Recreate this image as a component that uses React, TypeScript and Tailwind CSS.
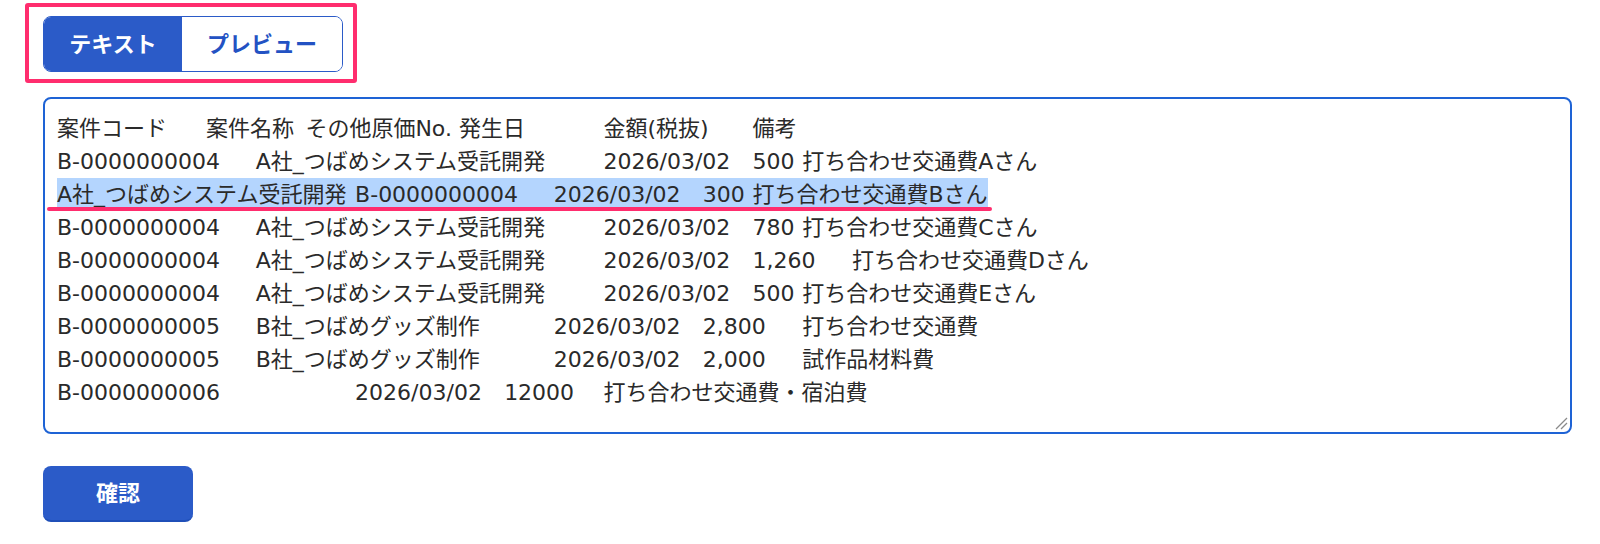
import { useState } from 'react';

const FONT = '"DejaVu Sans", "Noto Sans CJK JP", sans-serif';

const lines = [
  '案件コード\t案件名称\tその他原価No. 発生日\t\t金額(税抜)\t備考',
  'B-0000000004\tA社_つばめシステム受託開発\t\t2026/03/02\t500\t打ち合わせ交通費Aさん',
  'A社_つばめシステム受託開発\tB-0000000004\t2026/03/02\t300\t打ち合わせ交通費Bさん',
  'B-0000000004\tA社_つばめシステム受託開発\t\t2026/03/02\t780\t打ち合わせ交通費Cさん',
  'B-0000000004\tA社_つばめシステム受託開発\t\t2026/03/02\t1,260\t打ち合わせ交通費Dさん',
  'B-0000000004\tA社_つばめシステム受託開発\t\t2026/03/02\t500\t打ち合わせ交通費Eさん',
  'B-0000000005\tB社_つばめグッズ制作\t\t2026/03/02\t2,800\t打ち合わせ交通費',
  'B-0000000005\tB社_つばめグッズ制作\t\t2026/03/02\t2,000\t試作品材料費',
  'B-0000000006\t\t\t2026/03/02\t12000\t打ち合わせ交通費・宿泊費',
];

const selectedLine = 2;

export default function App() {
  const [mode, setMode] = useState<'text' | 'preview'>('text');

  return (
    <div
      className="min-h-screen bg-white pl-[43px] pr-[28px] pt-4"
      style={{ fontFamily: FONT }}
    >
      {/* tab switcher */}
      <div className="relative w-fit">
        <div className="flex h-14 overflow-hidden rounded-lg border border-[#2b5bc8]">
          <button
            onClick={() => setMode('text')}
            className={
              mode === 'text'
                ? 'w-[138px] bg-[#2b5bc8] text-[22px] font-bold text-white'
                : 'w-[138px] bg-white text-[22px] font-bold text-[#2352c3]'
            }
          >
            テキスト
          </button>
          <button
            onClick={() => setMode('preview')}
            className={
              mode === 'preview'
                ? 'w-[160px] bg-[#2b5bc8] text-[22px] font-bold text-white'
                : 'w-[160px] bg-white text-[22px] font-bold text-[#2352c3]'
            }
          >
            プレビュー
          </button>
        </div>
        {/* annotation frame */}
        <span className="pointer-events-none absolute -left-[18px] -top-[13px] h-[80px] w-[332px] rounded-[3px] border-4 border-[#ff2d6e]" />
      </div>

      {/* textarea-like editor */}
      <div className="relative mt-[25px] h-[337px] w-full rounded-lg border-2 border-[#1e63d5] bg-white px-3 pt-[13px]">
        <div className="whitespace-pre text-[22px] leading-[33px] text-[#2a2a2a] [tab-size:49.68px]">
          {lines.map((line, i) =>
            i === selectedLine ? (
              <div key={i} className="relative w-fit bg-[#b4d5fe]">
                {line}
                <span className="absolute -left-[10px] -right-[4px] top-[29px] h-1 rounded-full bg-[#ff2d6e]" />
              </div>
            ) : (
              <div key={i}>{line}</div>
            ),
          )}
        </div>
        <svg
          className="absolute bottom-[2px] right-[2px]"
          width="14"
          height="14"
          viewBox="0 0 14 14"
        >
          <line x1="2" y1="13" x2="13" y2="2" stroke="#8a8a8a" strokeWidth="1.2" />
          <line x1="7" y1="13" x2="13" y2="7" stroke="#8a8a8a" strokeWidth="1.2" />
        </svg>
      </div>

      <button className="mt-8 h-14 w-[150px] rounded-lg border-b-2 border-[#1f4fb8] bg-[#2b5bc8] text-[22px] font-bold text-white">
        確認
      </button>
    </div>
  );
}
